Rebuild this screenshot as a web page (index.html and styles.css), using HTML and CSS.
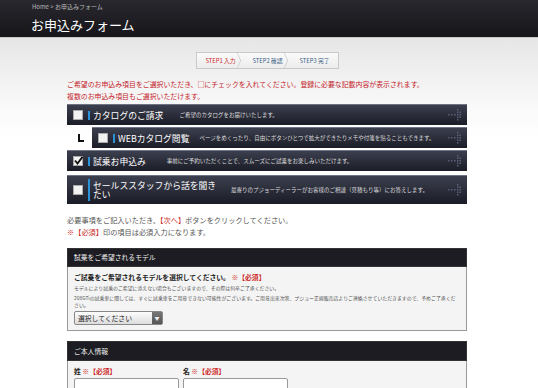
FILE: index.html
```html
<!DOCTYPE html>
<html lang="ja">
<head>
    <meta charset="UTF-8">
    <title>お申込みフォーム</title>
    <link rel="stylesheet" href="styles.css">
</head>
<body>
    <div id="header">
        <div class="crumb">Home &gt; お申込みフォーム</div>
        <h1>お申込みフォーム</h1>
    </div>

    <div id="main">
        <div class="steps">
            <span class="step current">STEP1 入力</span>
            <span class="step">STEP2 確認</span>
            <span class="step">STEP3 完了</span>
        </div>

        <p class="notice">ご希望のお申込み項目をご選択いただき、□にチェックを入れてください。登録に必要な記載内容が表示されます。<br>複数のお申込み項目もご選択いただけます。</p>

        <div class="item">
            <span class="box"></span><span class="mark"></span>
            <span class="item-title">カタログのご請求</span>
            <span class="item-desc">ご希望のカタログをお届けいたします。</span>
            <svg class="arrow" width="14" height="12" viewBox="0 0 14 12"><g fill="#5a5f78"><rect x="0" y="5" width="1.5" height="1.5"/><rect x="3" y="5" width="1.5" height="1.5"/><rect x="6" y="5" width="1.5" height="1.5"/><rect x="9" y="0" width="1.5" height="1.5"/><rect x="9" y="2.5" width="1.5" height="1.5"/><rect x="9" y="5" width="1.5" height="1.5"/><rect x="9" y="7.5" width="1.5" height="1.5"/><rect x="9" y="10" width="1.5" height="1.5"/><rect x="11.5" y="2.5" width="1.5" height="1.5"/><rect x="11.5" y="5" width="1.5" height="1.5"/><rect x="11.5" y="7.5" width="1.5" height="1.5"/></g></svg>
        </div>

        <div class="sub">
            <span class="elbow"></span>
            <div class="item">
                <span class="box"></span><span class="mark"></span>
                <span class="item-title">WEBカタログ閲覧</span>
                <span class="item-desc near">ページをめくったり、自由にボタンひとつで拡大ができたりメモや付箋を貼ることもできます。</span>
                <svg class="arrow" width="14" height="12" viewBox="0 0 14 12"><g fill="#5a5f78"><rect x="0" y="5" width="1.5" height="1.5"/><rect x="3" y="5" width="1.5" height="1.5"/><rect x="6" y="5" width="1.5" height="1.5"/><rect x="9" y="0" width="1.5" height="1.5"/><rect x="9" y="2.5" width="1.5" height="1.5"/><rect x="9" y="5" width="1.5" height="1.5"/><rect x="9" y="7.5" width="1.5" height="1.5"/><rect x="9" y="10" width="1.5" height="1.5"/><rect x="11.5" y="2.5" width="1.5" height="1.5"/><rect x="11.5" y="5" width="1.5" height="1.5"/><rect x="11.5" y="7.5" width="1.5" height="1.5"/></g></svg>
            </div>
        </div>

        <div class="item">
            <span class="box checked"><svg width="9" height="9" viewBox="0 0 9 9"><path d="M1 4.5 L3.5 7.5 L8.5 0.8" fill="none" stroke="#111" stroke-width="1.8"/></svg></span><span class="mark"></span>
            <span class="item-title">試乗お申込み</span>
            <span class="item-desc far">事前にご予約いただくことで、スムーズにご試乗をお楽しみいただけます。</span>
            <svg class="arrow" width="14" height="12" viewBox="0 0 14 12"><g fill="#5a5f78"><rect x="0" y="5" width="1.5" height="1.5"/><rect x="3" y="5" width="1.5" height="1.5"/><rect x="6" y="5" width="1.5" height="1.5"/><rect x="9" y="0" width="1.5" height="1.5"/><rect x="9" y="2.5" width="1.5" height="1.5"/><rect x="9" y="5" width="1.5" height="1.5"/><rect x="9" y="7.5" width="1.5" height="1.5"/><rect x="9" y="10" width="1.5" height="1.5"/><rect x="11.5" y="2.5" width="1.5" height="1.5"/><rect x="11.5" y="5" width="1.5" height="1.5"/><rect x="11.5" y="7.5" width="1.5" height="1.5"/></g></svg>
        </div>

        <div class="item tall">
            <span class="box"></span><span class="mark"></span>
            <span class="item-title wrap">セールススタッフから話を聞きたい</span>
            <span class="item-desc">最寄りのプジョーディーラーがお客様のご相談（見積もり等）にお答えします。</span>
            <svg class="arrow" width="14" height="12" viewBox="0 0 14 12"><g fill="#5a5f78"><rect x="0" y="5" width="1.5" height="1.5"/><rect x="3" y="5" width="1.5" height="1.5"/><rect x="6" y="5" width="1.5" height="1.5"/><rect x="9" y="0" width="1.5" height="1.5"/><rect x="9" y="2.5" width="1.5" height="1.5"/><rect x="9" y="5" width="1.5" height="1.5"/><rect x="9" y="7.5" width="1.5" height="1.5"/><rect x="9" y="10" width="1.5" height="1.5"/><rect x="11.5" y="2.5" width="1.5" height="1.5"/><rect x="11.5" y="5" width="1.5" height="1.5"/><rect x="11.5" y="7.5" width="1.5" height="1.5"/></g></svg>
        </div>

        <p class="guide">必要事項をご記入いただき、<span class="red">【次へ】</span>ボタンをクリックしてください。<br><span class="red">※【必須】</span>印の項目は必須入力になります。</p>

        <div class="section">
            <div class="section-head">試乗をご希望されるモデル</div>
            <div class="section-body">
                <div class="q">ご試乗をご希望されるモデルを選択してください。 <span class="red">※【必須】</span></div>
                <p class="small">モデルにより試乗のご希望に添えない場合もございますので、その際は何卒ご了承ください。</p>
                <p class="small">208GTiの試乗車に関しては、すぐに試乗車をご用意できない可能性がございます。ご用意出来次第、プジョー正規販売店よりご連絡させていただきますので、予めご了承ください。</p>
                <div class="select"><span>選択してください</span><span class="sel-btn">▼</span></div>
            </div>
        </div>

        <div class="section">
            <div class="section-head tall">ご本人情報</div>
            <div class="section-body">
                <div class="names">
                    <div class="field">
                        <div class="q">姓 <span class="red">※【必須】</span></div>
                        <div class="input"></div>
                    </div>
                    <div class="field">
                        <div class="q">名 <span class="red">※【必須】</span></div>
                        <div class="input"></div>
                    </div>
                </div>
            </div>
        </div>
    </div>
</body>
</html>
```

FILE: styles.css
```css
body {
    margin: 0;
    font-family: "Noto Sans CJK JP", "Noto Sans", sans-serif;
    background: linear-gradient(#e6e6e6 38px, #fafafa 110px, #ffffff 140px);
    overflow: hidden;
}
#header {
    height: 38px;
    background: linear-gradient(#28282e, #15151a);
    border-bottom: 1px solid #c8c8c8;
    padding-left: 32px;
    box-sizing: border-box;
}
.crumb { color: #bbb; font-size: 6px; padding-top: 3px; line-height: 8px; }
h1 { color: #fff; font-size: 13px; font-weight: normal; margin: 5px 0 0 -1px; line-height: 17px; }

#main { width: 400px; margin-left: 67px; }

.steps {
    display: flex;
    width: 141px;
    height: 15px;
    margin: 14px 0 0 129px;
    border: 1px solid #c9c9c9;
    background: linear-gradient(#fafafa, #ececec);
}
.step {
    flex: 1;
    font-size: 5.8px;
    line-height: 15px;
    text-align: center;
    color: #3b5f86;
    position: relative;
}
.step::after {
    content: "";
    position: absolute;
    right: 1px;
    top: 2px;
    width: 10px;
    height: 10px;
    border-top: 1px solid #c4c4c4;
    border-right: 1px solid #c4c4c4;
    transform: scaleX(0.45) rotate(45deg);
}
.step:last-child::after { display: none; }
.step.current { color: #d0242c; }

.notice {
    color: #c4232b;
    font-size: 6.9px;
    line-height: 12px;
    margin: 9px 0 0 0;
}

.item {
    display: flex;
    align-items: center;
    height: 20px;
    margin-top: 2px;
    background: linear-gradient(#3c3f4e, #1a1c26);
    border-top: 1px solid #707384;
    padding: 0 5px 0 6px;
}
.item.tall { height: 28px; margin-top: 4px; }
.box {
    width: 8px; height: 8px;
    background: #f2f2f2;
    border: 1px solid #aaa;
    position: relative;
}
.box svg { position: absolute; left: 0; top: -1px; }
.mark { width: 2px; height: 9px; background: #2a92d6; margin-left: 5px; }
.item.tall .mark { height: 22px; }
.item-title {
    color: #fff;
    font-size: 8.8px;
    margin-left: 3px;
    white-space: nowrap;
}
.item-title.wrap { white-space: normal; line-height: 9px; width: 128px; }
.item-desc { color: #ddd; font-size: 5.5px; margin-left: 16px; white-space: nowrap; }
.item-desc.near { margin-left: 10px; }
.item-desc.far { margin-left: 21px; }
.item.tall .item-desc { margin-left: 10px; }
.arrow { margin-left: auto; }

.sub { display: flex; align-items: center; margin-top: 2px; }
.sub .item { flex: 1; margin-top: 0; }
.elbow {
    width: 4px; height: 6px;
    border-left: 2px solid #111;
    border-bottom: 2px solid #111;
    margin: 0 8px 0 11px;
}

.guide {
    color: #555;
    font-size: 7.2px;
    line-height: 12px;
    margin: 10px 0 0 0;
}
.red { color: #cc1f25; }

.section { margin-top: 10px; }
.section-head {
    background: #1c1c22;
    color: #eee;
    font-size: 6.8px;
    height: 17px;
    line-height: 17px;
    padding-left: 6px;
    border: 1px solid #333;
}
.section-head.tall { height: 18px; line-height: 18px; }
.section-body {
    background: #f4f4f4;
    border: 1px solid #999;
    border-top: none;
    padding: 5px 6px 5px;
}
.q { font-size: 6.8px; font-weight: bold; color: #222; line-height: 10px; }
.small { font-size: 4.9px; color: #555; margin: 2px 0 0 0; line-height: 7.5px; }
.select {
    display: flex;
    width: 87px;
    height: 12px;
    margin-top: 2px;
    border: 1px solid #888;
    border-radius: 2px;
    background: linear-gradient(#fdfdfd, #dcdcdc);
    font-size: 6.8px;
    line-height: 12px;
    color: #222;
}
.select span:first-child { flex: 1; padding-left: 3px; }
.sel-btn {
    width: 10px;
    background: linear-gradient(#777, #555);
    color: #eee;
    font-size: 5px;
    text-align: center;
}
.names { display: flex; gap: 4px; }
.field { width: 105px; }
.input {
    height: 14px;
    margin-top: 2px;
    background: #fff;
    border: 1px solid #999;
    border-radius: 2px;
}
```
